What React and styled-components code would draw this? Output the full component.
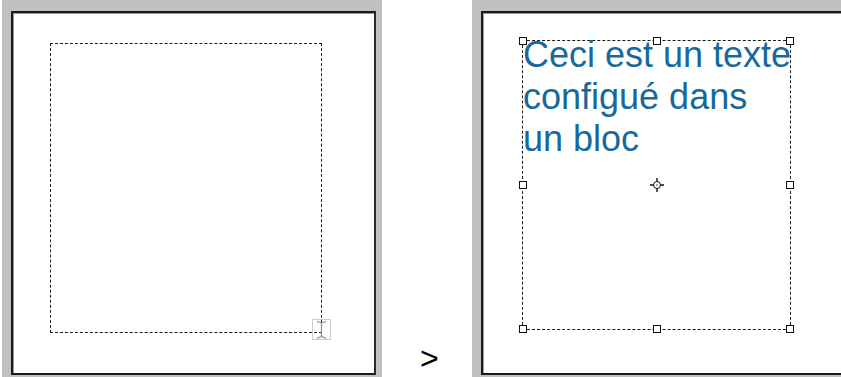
import React from 'react';
import styled, { createGlobalStyle } from 'styled-components';

const GlobalStyle = createGlobalStyle`
  html, body {
    margin: 0;
    padding: 0;
    background: #ffffff;
    overflow: hidden;
  }
  body {
    font-family: "Liberation Sans", Arial, sans-serif;
  }
`;

const Page = styled.div`
  display: flex;
  align-items: flex-start;
  width: 841px;
  height: 377px;
  overflow: hidden;
`;

const Panel = styled.div`
  flex: none;
  box-sizing: border-box;
  width: ${(p) => p.width}px;
  height: 380px;
  margin-left: ${(p) => p.offset}px;
  padding: 11px 6px 0 9px;
  background: #c0c0c0;
`;

const Canvas = styled.div`
  box-sizing: border-box;
  height: 364px;
  padding: ${(p) => p.pad};
  background: #ffffff;
  border: 2px solid #1a1a1a;
  border-right-color: #2a2a2a;
  box-shadow: inset 1px 1px 0 #9a9a9a;
`;

const Frame = styled.div`
  position: relative;
  box-sizing: border-box;
  width: ${(p) => p.w}px;
  height: ${(p) => p.h}px;
  border: 1px dashed #1a1a1a;
`;

const Handle = styled.span`
  position: absolute;
  box-sizing: border-box;
  width: 8px;
  height: 8px;
  margin: -4px 0 0 -4px;
  left: ${(p) => p.x};
  top: ${(p) => p.y};
  background: #ffffff;
  border: 1px solid #111111;
`;

const BlockText = styled.div`
  margin: -7px 0 0 0;
  font-family: "Liberation Sans", Arial, sans-serif;
  font-size: 36px;
  line-height: 42px;
  color: #17699b;
  white-space: pre;
`;

const Arrow = styled.div`
  flex: none;
  align-self: flex-end;
  width: 20px;
  margin: 0 0 0 38px;
  font-family: "Liberation Sans", Arial, sans-serif;
  font-size: 32px;
  line-height: normal;
  color: #000000;
`;

const Marker = styled.svg`
  position: absolute;
  left: ${(p) => p.x};
  top: ${(p) => p.y};
  overflow: visible;
`;

const handles = [
  ['0%', '0%'], ['50%', '0%'], ['100%', '0%'],
  ['0%', '50%'], ['100%', '50%'],
  ['0%', '100%'], ['50%', '100%'], ['100%', '100%'],
];

const TextCursor = () => (
  <Marker x="261px" y="275px" width="20" height="22" viewBox="0 0 20 22">
    <rect x="0.5" y="0.5" width="18" height="20" fill="none" stroke="#9a9a9a" strokeDasharray="1 1" />
    <path d="M5 2.5 L8 3.5 L11 3.5 L14 2.5 M9.5 3.5 L9.5 18 M5 19.5 L8 18 L11 18 L14 19.5" fill="none" stroke="#8a8a8a" strokeWidth="1.2" />
  </Marker>
);

const Crosshair = () => (
  <Marker x="calc(50% - 8px)" y="calc(50% - 8px)" width="16" height="16" viewBox="-8 -8 16 16">
    <circle cx="0" cy="0" r="3.5" fill="#fff" stroke="#111" strokeWidth="1" />
    <path d="M0 -7 L0 -3.5 M0 3.5 L0 7 M-7 0 L-3.5 0 M3.5 0 L7 0" stroke="#111" strokeWidth="1.4" />
    <circle cx="0" cy="0" r="0.7" fill="#111" />
  </Marker>
);

export default function App() {
  return (
    <>
      <GlobalStyle />
      <Page>
        <Panel width={380} offset={2}>
          <Canvas pad="30px 0 0 37px">
            <Frame w={272} h={290}>
              <TextCursor />
            </Frame>
          </Canvas>
        </Panel>

        <Arrow>&gt;</Arrow>

        <Panel width={400} offset={32}>
          <Canvas pad="27px 0 0 39px">
            <Frame w={269} h={290}>
              <BlockText>{'Ceci est un texte\nconfigué dans\nun bloc'}</BlockText>
              <Crosshair />
              {handles.map(([x, y]) => (
                <Handle key={x + y} x={x} y={y} />
              ))}
            </Frame>
          </Canvas>
        </Panel>
      </Page>
    </>
  );
}
